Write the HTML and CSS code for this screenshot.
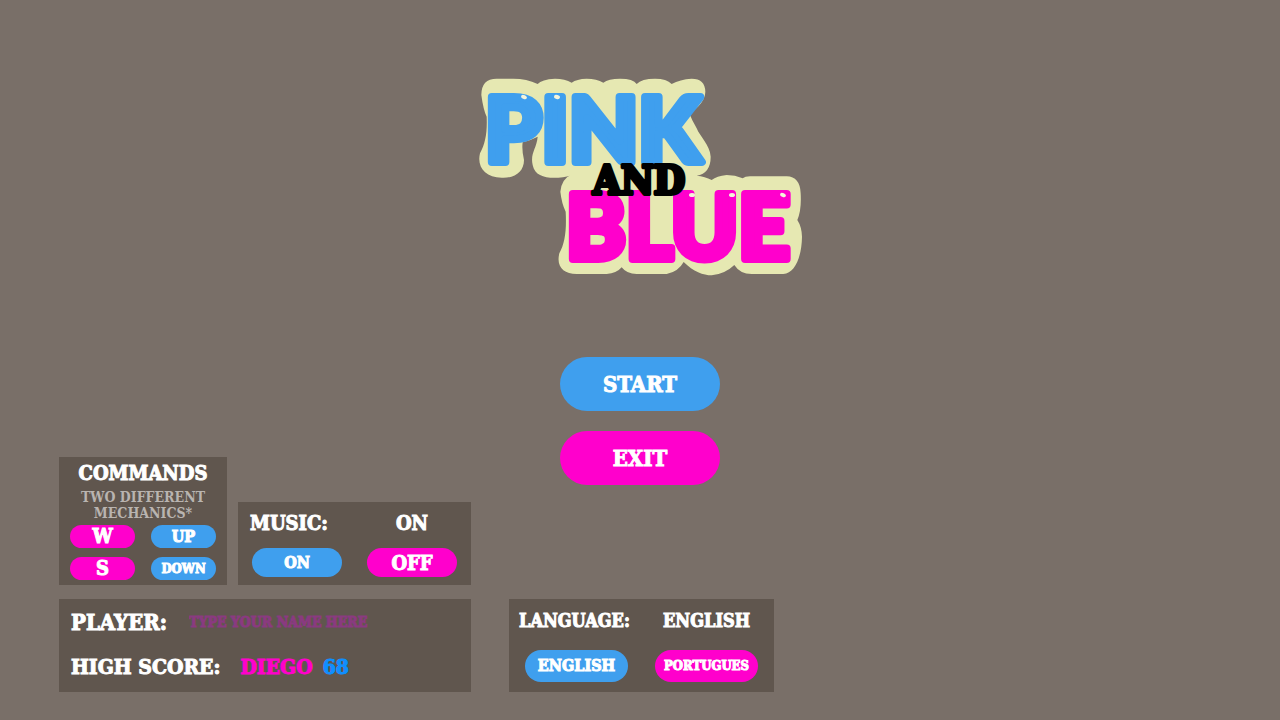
FILE: index.html
```html
<!DOCTYPE html>
<html lang="en">
<head>
    <meta charset="UTF-8">
    <meta name="viewport" content="width=device-width, initial-scale=1.0">
    <title>Pink and Blue</title>
    <link rel="stylesheet" href="styles.css">
</head>
<body>

    <div class="screen">
        <!-- Logo and main menu -->
        <main class="hero">
            <h1 class="logo">
                <svg viewBox="0 0 340 210" width="340" height="210">
                    <path class="logo-back" transform="scale(0.33333)" d="M80 26Q34 26 34 75Q40 120 50 140C52 190 46 220 30 250C20 290 45 323 95 323C135 325 162 305 162 270Q155 240 158 217Q180 212 203 200C200 235 180 250 188 285C195 318 225 325 265 323Q295 322 308 312Q275 325 271 365Q275 400 287 425C290 480 285 520 268 550C258 590 280 612 320 612L410 612Q440 610 455 592Q470 612 500 612L590 612Q625 605 641 576C670 605 700 616 725 616Q765 612 793 585Q810 612 845 612L940 612C975 610 995 560 996 500Q995 470 982 450Q995 420 992 370Q990 320 950 319L840 319Q825 319 818 325Q795 315 770 315Q740 318 725 330Q705 319 680 317Q722 310 722 260C720 225 690 200 680 175Q665 150 658 130Q705 100 706 65Q705 26 665 26Q630 28 605 42Q590 26 555 26Q515 26 500 42Q490 26 450 26Q415 26 400 38Q380 26 350 26Q320 27 305 38Q285 26 255 26Q215 28 203 42Q170 26 130 26Z"/>
                    <text class="logo-word pink" x="15" y="92">PINK</text>
                    <text class="logo-word blue" x="96" y="189">BLUE</text>
                    <g class="shine">
                        <ellipse cx="54" cy="27" rx="3" ry="2" transform="rotate(25 54 27)"/>
                        <ellipse cx="87" cy="27" rx="3" ry="2" transform="rotate(15 87 27)"/>
                        <ellipse cx="222" cy="125" rx="3" ry="2"/>
                        <ellipse cx="262" cy="125" rx="3" ry="2"/>
                        <ellipse cx="313" cy="125" rx="3" ry="2" transform="rotate(25 313 125)"/>
                    </g>
                    <text class="logo-and" x="123" y="124">AND</text>
                </svg>
            </h1>
            <nav class="menu">
                <button class="pill blue-pill menu-button">START</button>
                <button class="pill pink-pill menu-button">EXIT</button>
            </nav>
        </main>

        <!-- Bottom panels -->
        <div class="panels">
            <div class="left-panels">
                <div class="top-row">
                    <section class="panel commands">
                        <h2>COMMANDS</h2>
                        <p>TWO DIFFERENT MECHANICS*</p>
                        <div class="keys">
                            <button class="pill pink-pill large">W</button>
                            <button class="pill blue-pill">UP</button>
                            <button class="pill pink-pill large">S</button>
                            <button class="pill blue-pill small">DOWN</button>
                        </div>
                    </section>

                    <section class="panel music">
                        <div class="panel-head">
                            <span>MUSIC:</span>
                            <span class="value">ON</span>
                        </div>
                        <div class="panel-actions">
                            <button class="pill blue-pill">ON</button>
                            <button class="pill pink-pill large">OFF</button>
                        </div>
                    </section>
                </div>

                <section class="panel player">
                    <div class="player-row">
                        <label for="playerName">PLAYER:</label>
                        <input type="text" id="playerName" placeholder="TYPE YOUR NAME HERE">
                    </div>
                    <div class="player-row score-row">
                        <span>HIGH SCORE:</span>
                        <span class="best"><span class="best-name">DIEGO</span><span class="best-score">68</span></span>
                    </div>
                </section>
            </div>

            <section class="panel language">
                <div class="panel-head">
                    <span>LANGUAGE:</span>
                    <span class="value">ENGLISH</span>
                </div>
                <div class="panel-actions">
                    <button class="pill blue-pill">ENGLISH</button>
                    <button class="pill pink-pill small">PORTUGUES</button>
                </div>
            </section>
        </div>
    </div>

</body>
</html>
```
FILE: styles.css
```css
* {
    box-sizing: border-box;
}
body {
    margin: 0;
    background-color: #796f68;
    color: white;
    font-family: "DejaVu Serif Condensed", "DejaVu Serif", serif;
    font-weight: bold;
    font-size: 20px;
    line-height: 24px;
    -webkit-text-stroke: 1px;
}
h1, h2, p {
    margin: 0;
}
button, input {
    font: inherit;
    border: none;
    padding: 0;
}

/* The menu and the panels share one cell, the panels sit at its foot */
.screen {
    display: grid;
    min-height: 100vh;
}
.hero, .panels {
    grid-area: 1 / 1;
}
.hero {
    display: flex;
    flex-direction: column;
    align-items: center;
    gap: 77px;
    padding-top: 70px;
}

/* Logo */
.logo {
    line-height: 0;
    -webkit-text-stroke: 0;
}
.logo-back {
    fill: #e6e8b2;
}
.logo-word {
    font-family: Lato, sans-serif;
    font-weight: 900;
    font-size: 90px;
    stroke-width: 8px;
    stroke-linejoin: round;
}
.logo-word.pink {
    fill: #3f9fee;
    stroke: #3f9fee;
}
.logo-word.blue {
    fill: #ff00cc;
    stroke: #ff00cc;
}
.logo-and {
    font-size: 40px;
    fill: black;
    stroke: black;
    stroke-width: 4px;
    stroke-linejoin: round;
}
.shine {
    fill: #f4f4dc;
}

/* Buttons */
.menu {
    display: flex;
    flex-direction: column;
    gap: 20px;
}
.pill {
    color: white;
    border-radius: 30px;
    font-size: 16px;
    cursor: pointer;
}
.blue-pill {
    background-color: #3f9fee;
}
.pink-pill {
    background-color: #ff00cc;
}
.pill.large {
    font-size: 20px;
}
.pill.small {
    font-size: 13px;
}
.menu-button {
    width: 160px;
    height: 54px;
    font-size: 22px;
}

/* Panels */
.panels {
    align-self: end;
    justify-self: start;
    display: flex;
    align-items: flex-end;
    gap: 38px;
    padding: 0 0 28px 59px;
}
.left-panels {
    display: flex;
    flex-direction: column;
    gap: 14px;
}
.top-row {
    display: flex;
    align-items: flex-end;
    gap: 11px;
}
.panel {
    background-color: #60564e;
}
.panel-head, .panel-actions {
    display: flex;
    justify-content: space-between;
}
.value {
    text-align: center;
}

.commands {
    width: 168px;
    padding: 4px 11px 5px;
    text-align: center;
}
.commands h2 {
    font-size: 20px;
    line-height: 24px;
}
.commands p {
    margin: 4px 0;
    color: #b9b4b0;
    font-size: 14px;
    line-height: 16px;
    -webkit-text-stroke: 0;
}
.keys {
    display: grid;
    grid-template-columns: 1fr 1fr;
    gap: 9px 16px;
}
.keys .pill {
    height: 23px;
    line-height: 23px;
}

.music {
    width: 233px;
    padding: 9px 12px 8px;
}
.music .panel-actions {
    margin-top: 13px;
    padding: 0 2px;
}
.music .pill {
    width: 90px;
    height: 29px;
}
.music .value {
    width: 94px;
}

.player {
    display: flex;
    flex-direction: column;
    gap: 21px;
    padding: 11px 12px 13px;
    font-size: 22px;
}
.player-row {
    display: flex;
    gap: 22px;
}
.score-row {
    gap: 20px;
    font-size: 21px;
}
.player-row input {
    flex: 1;
    min-width: 0;
    background: none;
    color: #ff00cc;
    font-size: 14px;
    outline: none;
}
.player-row input::placeholder {
    color: #8a3a80;
    opacity: 1;
}
.best {
    display: flex;
    gap: 10px;
}
.best-name {
    color: #ff00cc;
}
.best-score {
    color: #0f8fff;
}

.language {
    width: 265px;
    padding: 10px;
    font-size: 18px;
}
.language .panel-actions {
    margin-top: 17px;
    padding: 0 6px;
}
.language .pill {
    width: 103px;
    height: 32px;
}
.language .value {
    width: 115px;
}
```
